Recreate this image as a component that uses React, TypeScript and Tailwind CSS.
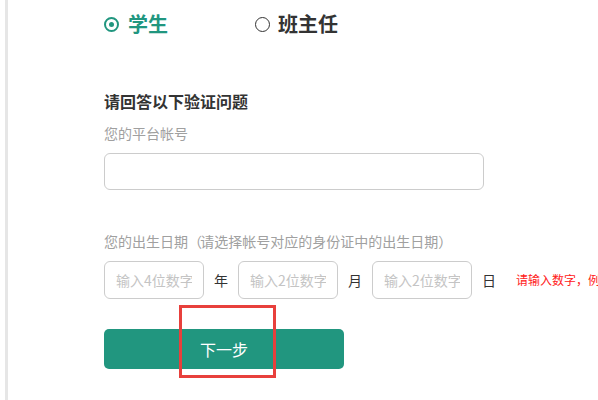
import React from 'react'

const FONT = { fontFamily: '"Microsoft YaHei", "Noto Sans CJK SC", "Noto Sans", sans-serif' }

function DateBox({ placeholder }: { placeholder: string }) {
  return (
    <input
      placeholder={placeholder}
      className="shrink-0 w-[100px] h-[38px] rounded-[6px] border border-[#cccccc] px-[11px] text-[14px] text-[#333] placeholder:text-[#c4c4c4] outline-none"
      style={FONT}
    />
  )
}

function Unit({ children }: { children: React.ReactNode }) {
  return <span className="shrink-0 w-[34px] text-center text-[14px] text-[#333]">{children}</span>
}

export default function App() {
  return (
    <div className="relative h-[400px] w-full overflow-hidden bg-white pl-[5px]" style={FONT}>
      <div className="h-full overflow-hidden border-l-[3px] border-[#e6e6e6] pl-[96px] pt-[10px]">
        {/* role switch */}
        <div className="flex items-center h-[28px]">
          <label className="flex items-center w-[151px] gap-[9px]">
            <span className="flex items-center justify-center w-[15px] h-[15px] rounded-full border-2 border-[#21967f]">
              <span className="w-[5px] h-[5px] rounded-full bg-[#21967f]" />
            </span>
            <span className="text-[20px] font-bold text-[#21967f] leading-[28px]">学生</span>
          </label>
          <label className="flex items-center gap-[8px]">
            <span className="w-[15px] h-[15px] rounded-full border-[1.5px] border-[#333]" />
            <span className="text-[20px] font-bold text-[#333] leading-[28px]">班主任</span>
          </label>
        </div>

        <h2 className="mt-[52px] text-[16px] font-bold leading-[22px] text-[#333]">请回答以下验证问题</h2>

        <p className="mt-[11px] text-[14px] leading-[20px] text-[#a0a0a0]">您的平台帐号</p>
        <input className="mt-[10px] block w-[380px] h-[37px] rounded-[6px] border border-[#cccccc] px-3 outline-none" />

        <p className="mt-[41px] text-[14px] leading-[20px] text-[#a0a0a0] whitespace-nowrap">
          您的出生日期<span className="tracking-[-5px]">（</span> 请选择帐号对应的身份证中的出生日期<span className="tracking-[-5px]">）</span>
        </p>
        <div className="mt-[10px] flex items-center whitespace-nowrap">
          <DateBox placeholder="输入4位数字" />
          <Unit>年</Unit>
          <DateBox placeholder="输入2位数字" />
          <Unit>月</Unit>
          <DateBox placeholder="输入2位数字" />
          <Unit>日</Unit>
          <span className="shrink-0 ml-[10px] text-[12px] text-[#ff2020]">请输入数字，例如：1990</span>
        </div>

        <button className="mt-[30px] flex items-center justify-center w-[240px] h-[40px] rounded-[5px] bg-[#21967f] text-[16px] text-white">
          下一步
        </button>
      </div>

      {/* annotation box */}
      <div className="absolute left-[179px] top-[305px] w-[97px] h-[73px] border-[3px] border-[#e8403c]" />
    </div>
  )
}
